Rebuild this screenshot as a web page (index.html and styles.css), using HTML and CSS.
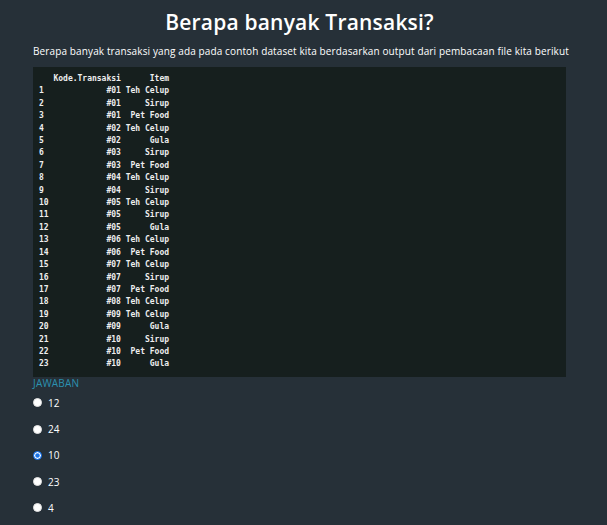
FILE: index.html
```html
<!DOCTYPE html>
<html lang="id">
<head>
<meta charset="utf-8">
<title>Berapa banyak Transaksi?</title>
<link rel="stylesheet" href="styles.css">
</head>
<body>
<main class="quiz">
  <h1 class="quiz-title">Berapa banyak Transaksi?</h1>
  <p class="quiz-question">Berapa banyak transaksi yang ada pada contoh dataset kita berdasarkan output dari pembacaan file kita berikut</p>
  <pre class="code-output">   Kode.Transaksi      Item
1             #01 Teh Celup
2             #01     Sirup
3             #01  Pet Food
4             #02 Teh Celup
5             #02      Gula
6             #03     Sirup
7             #03  Pet Food
8             #04 Teh Celup
9             #04     Sirup
10            #05 Teh Celup
11            #05     Sirup
12            #05      Gula
13            #06 Teh Celup
14            #06  Pet Food
15            #07 Teh Celup
16            #07     Sirup
17            #07  Pet Food
18            #08 Teh Celup
19            #09 Teh Celup
20            #09      Gula
21            #10     Sirup
22            #10  Pet Food
23            #10      Gula</pre>
  <div class="answers">
    <div class="answers-label">JAWABAN</div>
    <label class="option"><input type="radio" name="jawaban" value="12"><span>12</span></label>
    <label class="option"><input type="radio" name="jawaban" value="24"><span>24</span></label>
    <label class="option"><input type="radio" name="jawaban" value="10" checked><span>10</span></label>
    <label class="option"><input type="radio" name="jawaban" value="23"><span>23</span></label>
    <label class="option"><input type="radio" name="jawaban" value="4"><span>4</span></label>
  </div>
</main>
</body>
</html>
```

FILE: styles.css
```css
html, body {
  margin: 0;
  padding: 0;
  background: #263038;
}

body {
  font-family: "Open Sans", "Noto Sans", sans-serif;
  color: #ffffff;
}

.quiz {
  padding: 10px 41px 0 33px;
}

.quiz-title {
  margin: 0;
  text-align: center;
  font-size: 21px;
  line-height: 24px;
  font-weight: 600;
  letter-spacing: 0.2px;
  color: #ffffff;
}

.quiz-question {
  margin: 11px 0 0 0;
  font-size: 10px;
  line-height: 12px;
  font-weight: 500;
  letter-spacing: 0.12px;
  white-space: nowrap;
  color: #ffffff;
}

.code-output {
  margin: 10px 0 0 0;
  padding: 6px 6px;
  background: #161f1e;
  color: #eeeeee;
  font-family: "DejaVu Sans Mono", monospace;
  font-size: 8px;
  line-height: 12.4px;
  font-weight: bold;
}

.answers {
  display: flex;
  flex-direction: column;
}

.answers-label {
  font-size: 10px;
  line-height: 12px;
  letter-spacing: 0.2px;
  color: #2b91b0;
  margin-bottom: 1px;
}

.option {
  display: flex;
  align-items: center;
  gap: 6px;
  height: 26.25px;
  font-size: 10px;
  font-weight: 500;
  color: #ffffff;
}

.option input {
  appearance: none;
  -webkit-appearance: none;
  margin: 0;
  width: 9px;
  height: 9px;
  border-radius: 50%;
  background: #ffffff;
  border: 1px solid #e4e4e4;
  box-sizing: border-box;
}

.option input:checked {
  border: 1.5px solid #1a73e8;
  box-shadow: inset 0 0 0 1.2px #ffffff;
  background: #1a73e8;
}
```
